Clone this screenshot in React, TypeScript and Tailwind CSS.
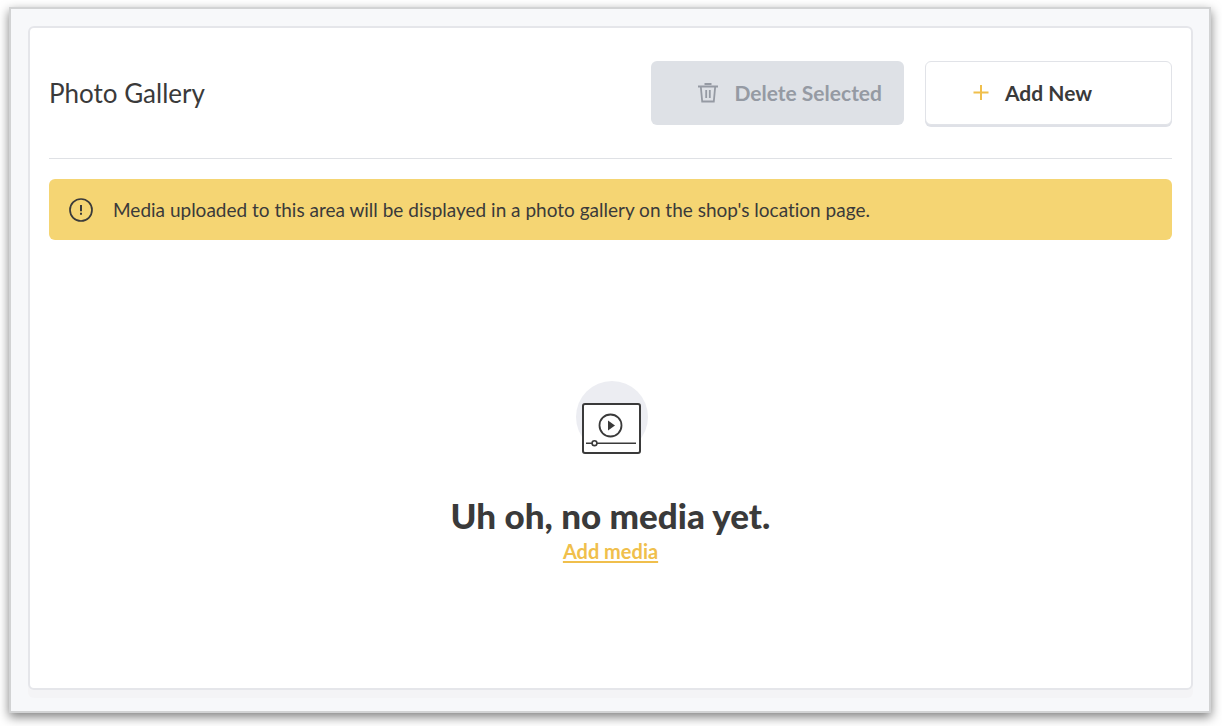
const playerStroke = '#3a3a3a';

function TrashIcon() {
  return (
    <svg className="h-5 w-5 shrink-0" viewBox="0 0 20 20" fill="none" stroke="currentColor" strokeWidth="1.8" aria-hidden="true">
      <path d="M0 3.5h20M6.5 1h7" />
      <path d="M2.8 3.5l1.4 15h11.6l1.4-15" />
      <path d="M8.2 7v8M11.8 7v8" />
    </svg>
  );
}

function PlusIcon() {
  return (
    <svg className="h-4 w-4 shrink-0 text-[#f0bf4c]" viewBox="0 0 16 16" fill="none" stroke="currentColor" strokeWidth="2" aria-hidden="true">
      <path d="M8 0v15M.5 7.5h15" />
    </svg>
  );
}

function AlertIcon() {
  return (
    <svg className="h-6 w-6 shrink-0" viewBox="0 0 24 24" fill="none" stroke="currentColor" strokeWidth="1.7" aria-hidden="true">
      <circle cx="12" cy="12" r="11" />
      <path d="M12 7v6.2M12 14.8v2" strokeWidth="2" />
    </svg>
  );
}

function MediaIllustration() {
  return (
    <svg className="h-[76px] w-[76px]" viewBox="0 0 76 76" fill="none" aria-hidden="true">
      <circle cx="39" cy="37" r="36" fill="#ecedf2" />
      <rect x="10" y="24" width="57" height="49" rx="2" fill="#fff" stroke={playerStroke} strokeWidth="2" />
      <circle cx="37.5" cy="45.5" r="11" fill="#fff" stroke={playerStroke} strokeWidth="1.8" />
      <path d="M35 40.5v10l7-5z" fill={playerStroke} />
      <path d="M13 63.2h50" stroke={playerStroke} strokeWidth="1.5" />
      <circle cx="21.5" cy="63.2" r="2.4" fill="#fff" stroke={playerStroke} strokeWidth="1.6" />
    </svg>
  );
}

export default function App() {
  return (
    <div className="flex min-h-screen bg-white pt-[7px] pr-[11px] pb-[13px] pl-[9px] font-['Lato',sans-serif] text-[#3a3a3a]">
      <div className="flex flex-1 border-2 border-[#d2d3d4] bg-[#f7f8fa] pt-[17px] pr-4 pb-[21px] pl-[17px] shadow-[0_4px_10px_rgba(0,0,0,0.5)]">
        <main className="flex flex-1 flex-col rounded-md border-2 border-[#e5e6ea] bg-white px-[19px] shadow-[0_8px_0_#f4f4f6]">
          <header className="flex items-center justify-between border-b border-[#dfe1e5] py-[33px]">
            <h1 className="text-[26px] leading-8">Photo Gallery</h1>
            <div className="flex gap-[21px]">
              <button
                type="button"
                disabled
                className="flex h-16 w-[253px] items-center justify-end gap-4 rounded-md bg-[#dee1e6] pr-[22px] text-[21px] font-bold text-[#959aa3]"
              >
                <TrashIcon />
                Delete Selected
              </button>
              <button
                type="button"
                className="flex h-16 w-[247px] items-center gap-4 rounded-md border border-[#e1e3e8] bg-white pl-[47px] text-[21px] font-bold shadow-[0_2px_0_#dfe1e7]"
              >
                <PlusIcon />
                Add New
              </button>
            </div>
          </header>

          <div role="note" className="mt-5 flex h-[61px] items-center gap-5 rounded-md bg-[#f5d573] px-5">
            <AlertIcon />
            <p className="text-[19px] leading-7 [font-variant-ligatures:none]">
              Media uploaded to this area will be displayed in a photo gallery on the shop's location page.
            </p>
          </div>

          <section className="flex flex-1 flex-col items-center pt-[140px]">
            <MediaIllustration />
            <h2 className="mt-[35px] text-[35px] leading-[48px] font-black">Uh oh, no media yet.</h2>
            <a href="#add-media" className="text-[20px] leading-6 font-bold text-[#f0bf4c] underline underline-offset-2">
              Add media
            </a>
          </section>
        </main>
      </div>
    </div>
  );
}
